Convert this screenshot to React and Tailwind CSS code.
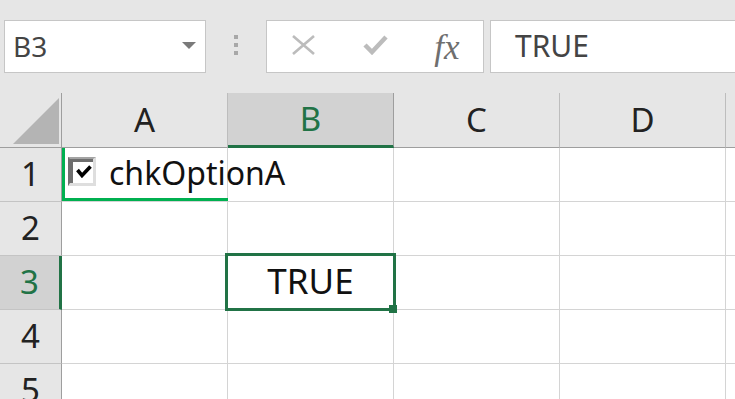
import React from 'react';

const COLS = ['A', 'B', 'C', 'D', 'E'];
const ROWS = [1, 2, 3, 4, 5];

function HeaderCell({ label, selected }) {
  return (
    <div
      className={
        'w-[166px] shrink-0 h-full flex items-center justify-center border-r text-[33px] leading-none ' +
        (selected
          ? 'bg-[#d2d2d2] text-[#217346] border-r-[#9e9e9e] border-b-[3px] border-b-[#217346]'
          : 'bg-[#e6e6e6] text-[#222] border-r-[#bdbdbd] border-b border-b-[#9e9e9e]')
      }
    >
      <span className="pb-[2px]">{label === 'E' ? '' : label}</span>
    </div>
  );
}

export default function App() {
  return (
    <div className="w-[735px] h-[399px] overflow-hidden bg-[#e6e6e6] relative font-['Noto_Sans',sans-serif]">
      {/* Top bar */}
      <div className="flex pt-[20px] h-[93px]">
        <div className="ml-[4px] w-[202px] h-[53px] bg-white border border-[#c6c6c6] flex items-center justify-between pl-[8px] pr-[9px]">
          <span className="text-[28px] text-[#444] leading-none pb-[2px]">B3</span>
          <svg width="14" height="7" viewBox="0 0 14 7" className="mb-[2px]">
            <polygon points="0,0 14,0 7,7" fill="#7a7a7a" />
          </svg>
        </div>
        <div className="w-[60px] h-[53px] flex flex-col items-center justify-center gap-[4px] pb-[4px]">
          <div className="w-[4px] h-[4px] bg-[#a8a8a8]" />
          <div className="w-[4px] h-[4px] bg-[#a8a8a8]" />
          <div className="w-[4px] h-[4px] bg-[#a8a8a8]" />
        </div>
        <div className="w-[218px] h-[53px] bg-white border border-[#c6c6c6] flex items-center">
          <div className="w-[72px] flex justify-center pb-[4px]">
            <svg width="23" height="20" viewBox="0 0 23 20">
              <path d="M1 1 L22 19 M22 1 L1 19" stroke="#bcbcbc" strokeWidth="2.6" fill="none" />
            </svg>
          </div>
          <div className="w-[72px] flex justify-center pb-[4px]">
            <svg width="25" height="21" viewBox="0 0 25 21">
              <path d="M2 11 L9 18 L23 3" stroke="#bcbcbc" strokeWidth="4.5" fill="none" strokeLinejoin="miter" />
            </svg>
          </div>
          <div className="w-[72px] flex justify-center">
            <span className="font-['Liberation_Serif',serif] italic text-[35px] leading-none text-[#6f6f6f] pt-[2px]">
              fx
            </span>
          </div>
        </div>
        <div className="ml-[6px] flex-1 h-[53px] bg-white border-y border-l border-[#c6c6c6] flex items-center pl-[24px]">
          <span className="text-[30px] text-[#444] leading-none pb-[2px]">TRUE</span>
        </div>
      </div>

      {/* Grid */}
      <div className="relative">
        <div className="flex h-[55px]">
          <div className="w-[62px] shrink-0 h-full border-r border-b border-[#9e9e9e] flex items-end justify-end pr-[2px] pb-[3px]">
            <svg width="46" height="46" viewBox="0 0 46 46">
              <polygon points="46,0 46,46 0,46" fill="#b4b4b4" />
            </svg>
          </div>
          {COLS.map((c) => (
            <HeaderCell key={c} label={c} selected={c === 'B'} />
          ))}
        </div>
        {ROWS.map((r) => (
          <div key={r} className="flex h-[54px]">
            <div
              className={
                'w-[62px] shrink-0 h-full flex items-center justify-center border-b border-b-[#c4c4c4] text-[33px] leading-none ' +
                (r === 3
                  ? 'bg-[#d2d2d2] text-[#217346] border-r-[3px] border-r-[#217346]'
                  : 'bg-[#e6e6e6] text-[#222] border-r border-r-[#9e9e9e]')
              }
            >
              <span className="pb-[2px]">{r}</span>
            </div>
            {COLS.map((c) => (
              <div
                key={c}
                className="w-[166px] shrink-0 h-full bg-white border-r border-b border-[#d4d4d4] flex items-center justify-center"
              >
                {r === 3 && c === 'B' ? (
                  <span className="text-[35px] leading-none text-[#111] pb-[5px]">TRUE</span>
                ) : null}
              </div>
            ))}
          </div>
        ))}

        {/* Green border on A1 */}
        <div className="absolute left-[62px] top-[55px] w-[166px] h-[53px] border-l-[3px] border-b-[3px] border-[#00b050]" />

        {/* Checkbox form control */}
        <div className="absolute left-[68px] top-[64px] flex items-start">
          <div className="w-[28px] h-[29px] border-t-[2px] border-l-[2px] border-t-[#a3a3a3] border-l-[#6e6e6e] border-r-[3px] border-b-[3px] border-r-[#dedede] border-b-[#dedede]">
            <div className="w-full h-full border-t-[3px] border-l-[3px] border-[#6e6e6e] bg-white pl-[3px] pt-[3px]">
              <svg width="16" height="13" viewBox="0 0 16 13">
                <path d="M1.5 5 L6 10.5 L14.5 1.5" stroke="#000" strokeWidth="3.6" fill="none" />
              </svg>
            </div>
          </div>
          <span className="ml-[13px] mt-[0px] text-[32px] leading-none text-[#111]">chkOptionA</span>
        </div>

        {/* Selection B3 */}
        <div className="absolute left-[225px] top-[160px] w-[171px] h-[58px] border-[3px] border-[#217346]" />
        <div className="absolute left-[389px] top-[212px] w-[8px] h-[8px] bg-[#217346]" />
      </div>
    </div>
  );
}
